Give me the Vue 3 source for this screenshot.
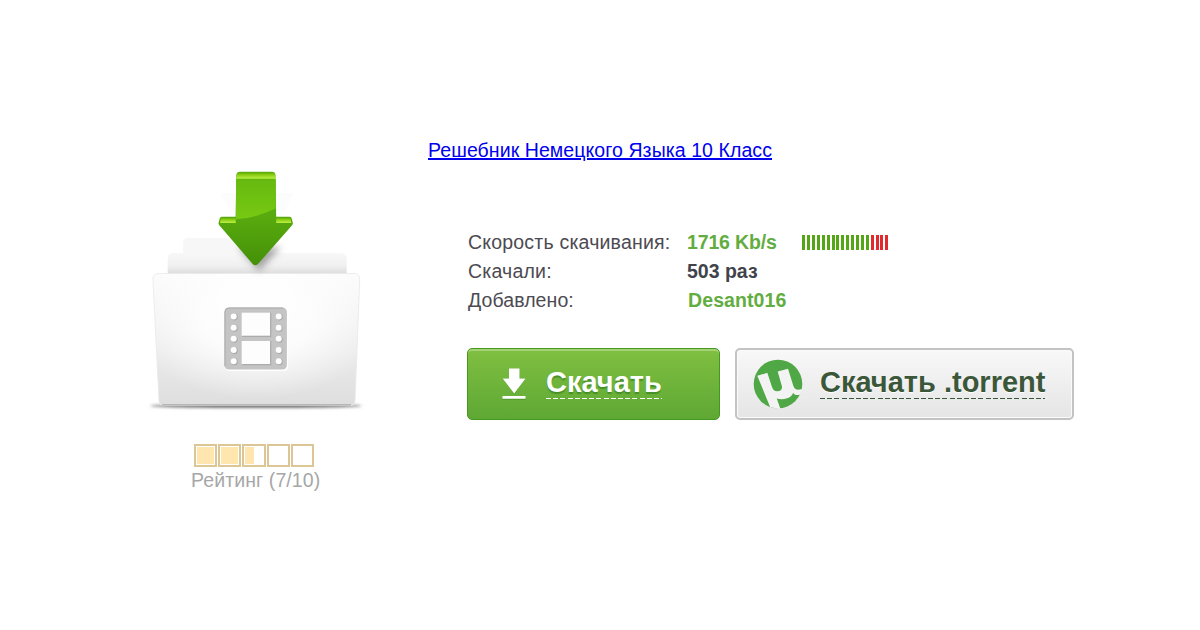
<template>
  <main class="page">
    <aside class="preview">
      <svg class="folder" viewBox="140 160 240 260" width="240" height="260">
        <defs>
          <linearGradient id="front" x1="0" y1="0" x2="0" y2="1">
            <stop offset="0" stop-color="#fcfcfc" />
            <stop offset=".4" stop-color="#f1f1f1" />
            <stop offset="1" stop-color="#dedede" />
          </linearGradient>
          <radialGradient id="shine" cx=".5" cy=".35" r=".6">
            <stop offset="0" stop-color="#fff" />
            <stop offset=".45" stop-color="#fff" stop-opacity=".8" />
            <stop offset="1" stop-color="#fff" stop-opacity="0" />
          </radialGradient>
          <linearGradient id="back" x1="0" y1="0" x2="0" y2="1">
            <stop offset="0" stop-color="#f8f8f8" />
            <stop offset=".6" stop-color="#f0f0f0" />
            <stop offset="1" stop-color="#dcdcdc" />
          </linearGradient>
          <linearGradient id="face" x1="0" y1="0" x2="0" y2="1">
            <stop offset="0" stop-color="#5fb50d" />
            <stop offset=".5" stop-color="#57a90e" />
            <stop offset="1" stop-color="#459008" />
          </linearGradient>
          <linearGradient id="gloss" x1="0" y1="0" x2="0" y2="1">
            <stop offset="0" stop-color="#66b90f" />
            <stop offset="1" stop-color="#78c913" />
          </linearGradient>
          <linearGradient id="edge" x1="0" y1="0" x2="0" y2="1">
            <stop offset="0" stop-color="#5ea90a" />
            <stop offset=".35" stop-color="#86cc10" />
            <stop offset="1" stop-color="#bcf046" />
          </linearGradient>
          <filter id="soft" x="-30%" y="-200%" width="160%" height="500%">
            <feGaussianBlur stdDeviation="1.5" />
          </filter>
          <filter id="wide" x="-60%" y="-60%" width="220%" height="220%">
            <feGaussianBlur stdDeviation="3.5" />
          </filter>
        </defs>

        <!-- folder -->
        <path d="M221 193h72l-8 18h-55z" fill="#fcfcfc" />
        <path d="M183 255v-12q0-5 5-5h48l12 16z" fill="#f7f7f7" />
        <path d="M167.700 274v-15q0-6 6-6h167q6 0 6 6v15z" fill="url(#back)" />
        <ellipse cx="256" cy="405.800" rx="106" ry="2" fill="#666" filter="url(#soft)" />
        <path d="M153 280q-.300-6.500 6-6.500h195q6 0 5.700 6.500L355 401q-.300 4.500-5 4.500H164q-4.500 0-5-4.500z" fill="url(#front)" />
        <path d="M153 280q-.300-6.500 6-6.500h195q6 0 5.700 6.500L355 401q-.300 4.500-5 4.500H164q-4.500 0-5-4.500z" fill="url(#shine)" />
        <path d="M153 280q-.300-6.500 6-6.500h195q6 0 5.700 6.500L355 401q-.300 4.500-5 4.500H164q-4.500 0-5-4.500z" fill="none" stroke="#e8e8e8" stroke-width=".8" />
        <path d="M162 404.800h189" stroke="#a8a8a8" stroke-width="1.200" />

        <!-- arrow -->
        <path d="M238 247l21 24 22-24z" fill="#555" opacity=".5" filter="url(#wide)" />
        <path d="M240 171.700h32q3 0 3.500 3l.7 42h13.500q1.700 0 2.100 2l1 4q.300 1.300-.700 2.500L258 264q-2.700 2.600-5.300 0L219.300 225.200q-1-1.200-.7-2.500l1-4q.5-2 2.300-2h13.700l.7-42q.500-3 3.700-3z" fill="url(#face)" />
        <path d="M239 172.500h34q1.500 0 2 2l.6 4.200h-39.200l.6-4.200q.500-2 2-2z" fill="url(#edge)" />
        <path d="M221 217.500h14.700v5.500h-15.700zM276.200 217.500h14l1.200 5.500h-15.200z" fill="url(#edge)" />
        <path d="M236 179.500h39.800v29q-8 3.500-16 6.300-11 3.700-23.800 4.500z" fill="url(#gloss)" />

        <!-- film strip -->
        <rect x="225" y="308.500" width="63" height="62.500" rx="4.500" fill="#fff" />
        <rect x="224.400" y="307.500" width="62.500" height="62" rx="4.500" fill="#c4c4c4" />
        <path d="M225 366v-54q0-4 4-4h54" fill="none" stroke="#aaa" />
        <g v-for="y in [312.7, 341]" :key="y">
          <rect x="241.700" :y="y" width="28.500" height="23.200" fill="#fdfdfd" />
          <path :d="`M270.700 ${y}v23.700h-28.500`" fill="none" stroke="#ababab" stroke-width="1.200" />
        </g>
        <g v-for="y in [316.4, 327.7, 338.8, 350, 361.2]" :key="y">
          <circle cx="234.400" :cy="y + 0.7" r="3.300" fill="#a8a8a8" />
          <circle cx="233.700" :cy="y" r="3" fill="#fff" />
          <circle cx="279.400" :cy="y + 0.7" r="3.300" fill="#a8a8a8" />
          <circle cx="278.700" :cy="y" r="3" fill="#fff" />
        </g>
      </svg>

      <div class="rating">
        <span v-for="(fill, i) in rating" :key="i" class="box">
          <i class="fill" :style="{ width: fill + '%' }"></i>
        </span>
      </div>
      <div class="rating-text">Рейтинг (7/10)</div>
    </aside>

    <section class="content">
      <a class="title" href="#">Решебник Немецкого Языка 10 Класс</a>

      <dl class="info">
        <dt>Скорость скачивания:</dt>
        <dd class="green">
          <span class="speed">1716 Kb/s</span>
          <span class="meter">
            <i v-for="n in 18" :key="n" :class="{ red: n > 14 }"></i>
          </span>
        </dd>
        <dt>Скачали:</dt>
        <dd>503 раз</dd>
        <dt class="added">Добавлено:</dt>
        <dd class="green user">Desant016</dd>
      </dl>

      <div class="actions">
        <button class="btn primary">
          <svg class="down" viewBox="0 0 24 32" width="24" height="32">
            <path d="M7 1.500h10.500v8.500h6L12.200 26.500.700 10H7zM.500 30h23v2H.500z" fill="#3f8a20" opacity=".5" />
            <path d="M7 .500h10.500v10h6L12.200 25.500.700 10.500H7zM.500 28h23v2.700H.500z" fill="#fff" />
          </svg>
          <span class="caption">Скачать</span>
        </button>
        <button class="btn torrent">
          <svg class="mu" viewBox="0 0 50 50" width="50" height="50">
            <circle cx="25" cy="25" r="24.300" fill="#4fa845" />
            <path d="M4.300 16.800L14.300 13.800 19 28q1.400 4.300 5.200 4.200 5.300-.200 4.700-5L24.700 12.500 35 9.800l5.300 17q1.300 4 5 4l4.200-.800-2.200 5.500q-3.800 1-5.500 0-1.300-.600-1.700-1.700-1.400 4.300-6 5.500-5.300 1.600-10.400.200L27.500 50l-10.300-1.800z" fill="#f3f3f3" />
          </svg>
          <span class="caption">Скачать .torrent</span>
        </button>
      </div>
    </section>
  </main>
</template>

<script setup>
// fill of each rating box, in percent
const rating = [100, 100, 50, 0, 0]
</script>

<style>
body {
  background: #fff;
}
</style>

<style scoped>
.page {
  display: flex;
  width: 1200px;
  height: 630px;
  box-sizing: border-box;
  padding: 136px 0 0 140px;
  overflow: hidden;
  font-family: 'Liberation Sans', Arial, sans-serif;
}

.preview {
  width: 240px;
  padding-top: 24px;
}

.folder { display: block; }

.rating {
  display: flex;
  gap: 1px;
  margin: 24px 0 0 54px;
}

.box {
  box-sizing: border-box;
  width: 23.200px;
  height: 23px;
  padding: 1px;
  border: 2px solid #dcc695;
  background: #fff;
}

.fill {
  display: block;
  height: 100%;
  background: #ffe6ae;
}

.rating-text {
  margin: 1px 0 0 51px;
  font-size: 19.500px;
  line-height: 24px;
  letter-spacing: .1px;
  color: #a7a7a7;
  white-space: nowrap;
}

.content { padding-left: 48px; }

.title {
  display: block;
  font-size: 19.500px;
  line-height: 28px;
  letter-spacing: .08px;
  color: #0000ee;
  text-decoration: underline;
  text-decoration-thickness: 2px;
  text-underline-offset: 1px;
  white-space: nowrap;
}

.info {
  display: grid;
  grid-template-columns: 219px auto;
  grid-auto-rows: 29px;
  margin: 64px 0 0 40px;
  font-size: 19.500px;
  line-height: 29px;
  color: #4d4a52;
  white-space: nowrap;
}

dt { letter-spacing: .2px; }

dt.added { letter-spacing: .08px; }

dd {
  display: flex;
  align-items: center;
  margin: 0;
  font-weight: bold;
  color: #3f434c;
}

dd.green { color: #62ad3f; }

dd.user {
  padding-left: 1px;
  letter-spacing: .1px;
}

.speed { letter-spacing: -.15px; }

.meter {
  display: flex;
  gap: 1.900px;
  margin-left: 25.500px;
}

.meter i {
  width: 3px;
  height: 15px;
  background: #55a616;
}

.meter i.red { background: #e02a2e; }

.actions {
  display: flex;
  gap: 15px;
  margin: 33px 0 0 39px;
}

.btn {
  display: flex;
  align-items: center;
  box-sizing: border-box;
  height: 72px;
  padding: 0;
  border-radius: 5px;
  font-family: inherit;
  font-size: 29px;
  font-weight: bold;
  white-space: nowrap;
}

.primary {
  width: 253px;
  border: 1.500px solid #45971f;
  background: linear-gradient(#80bf41, #5ea834);
  box-shadow: inset 0 2px 0 #a3d376;
  color: #fff;
  text-shadow: 0 2px 1px #488f28;
}

.down { margin: 0 20px 0 34px; }

.caption {
  height: 33px;
  box-sizing: border-box;
  margin-bottom: 3px;
  line-height: 33px;
  background: repeating-linear-gradient(90deg, currentColor 0 5px, transparent 5px 7.200px) 0 100% / 100% 1px no-repeat;
}

.torrent {
  width: 339px;
  border: 2px solid #c3c3c3;
  background: linear-gradient(#f8f8f8, #e5e5e5);
  box-shadow: inset 0 0 0 1px #fafafa;
  color: #3b573a;
  text-shadow: 0 1px 1px #fff;
}

.mu { margin: 0 17px 0 16px; }
</style>
